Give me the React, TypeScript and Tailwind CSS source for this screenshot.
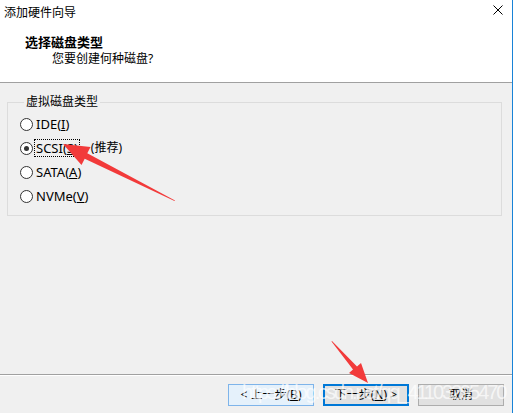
import React from "react";

const ui = { fontFamily: '"Noto Sans", "Noto Sans CJK SC", sans-serif' };

interface RadioProps {
  checked?: boolean;
  children: React.ReactNode;
}

const Radio = (props: RadioProps) => {
  return (
    <div className="flex h-[24px] items-center">
      <span className="flex h-[13px] w-[13px] items-center justify-center rounded-full border border-[#333] bg-white">
        {props.checked && <span className="h-[5px] w-[5px] rounded-full bg-[#333]" />}
      </span>
      <div className="ml-[3px] flex items-center">{props.children}</div>
    </div>
  );
};

interface ButtonProps {
  className: string;
  children: React.ReactNode;
}

const WizButton = (props: ButtonProps) => {
  return (
    <div
      className={`flex h-[22px] w-[86px] items-center justify-center text-[12px] leading-[16px] text-black ${props.className}`}
    >
      {props.children}
    </div>
  );
};

const App = () => {
  return (
    <div
      className="relative flex h-[413px] w-[513px] flex-col overflow-hidden border-r border-[#1883d7] bg-[#f0f0f0] text-black"
      style={ui}
    >
      {/* header */}
      <div className="h-[83px] border-b border-[#a0a0a0] bg-white">
        <div className="flex justify-between pt-[5px] pl-[4px] pr-[9px]">
          <span className="text-[12px] leading-[16px]">添加硬件向导</span>
          <svg width="10" height="10" viewBox="0 0 10 10">
            <path d="M0.5 0.5 L9.5 9.5 M9.5 0.5 L0.5 9.5" stroke="#000" strokeWidth="1" fill="none" />
          </svg>
        </div>
        <div className="mt-[13px] pl-[25px] text-[13px] font-bold leading-[17px]">选择磁盘类型</div>
        <div className="pl-[52px] text-[12px] leading-[16px]">您要创建何种磁盘?</div>
      </div>

      {/* group box */}
      <fieldset className="mx-[7px] mt-[11px] w-[495px] border border-[#dcdcdc] pl-[12px] pt-[2px] pb-[7px]">
        <legend className="ml-[4px] px-[2px] text-[12px] leading-[16px]">虚拟磁盘类型</legend>
        <Radio>
          <span className="text-[13px] leading-[16px]">
            IDE(<u>I</u>)
          </span>
        </Radio>
        <Radio checked>
          <span className="-ml-[2px] border border-dotted border-black px-[1px] text-[13px] leading-[16px]">
            SCSI(<u>S</u>)
          </span>
          <span className="ml-[11px] text-[12px] leading-[16px]">(推荐)</span>
        </Radio>
        <Radio>
          <span className="text-[13px] leading-[16px]">
            SATA(<u>A</u>)
          </span>
        </Radio>
        <Radio>
          <span className="text-[13px] leading-[16px]">
            NVMe(<u>V</u>)
          </span>
        </Radio>
      </fieldset>

      <div className="flex-1" />

      {/* footer */}
      <div className="border-t border-[#a0a0a0]">
        <div className="h-[1px] bg-white" />
        <div className="flex justify-end gap-[9px] pt-[8px] pr-[8px] pb-[7px]">
          <WizButton className="border border-[#7eb4ea] bg-[#e5f1fb]">&lt; 上一步(<u>B</u>)</WizButton>
          <WizButton className="border-2 border-[#0078d7] bg-[#e1e1e1]">下一步(<u>N</u>) &gt;</WizButton>
          <WizButton className="border border-[#adadad] bg-[#e1e1e1]">取消</WizButton>
        </div>
      </div>

      {/* watermark */}
      <span
        className="pointer-events-none absolute left-[242px] top-[382px] whitespace-nowrap text-[20px] leading-none tracking-[-2.1px] text-white/70"
        style={{ fontFamily: '"Liberation Sans", sans-serif' }}
      >
        https://blog.csdn.net/qq_41103295470
      </span>

      {/* annotation arrows */}
      <svg className="pointer-events-none absolute left-0 top-0" width="513" height="413" viewBox="0 0 513 413">
        <polygon points="175,200.5 87.3,153.3 90.5,147 63,144 81.5,165 84.7,158.7 174.5,201" fill="#f23a3a" />
        <polygon points="332,341 357,366.4 361,363 368,383 349,373 353,369.6 331.5,341.5" fill="#f23a3a" />
      </svg>
    </div>
  );
};

export default App;
